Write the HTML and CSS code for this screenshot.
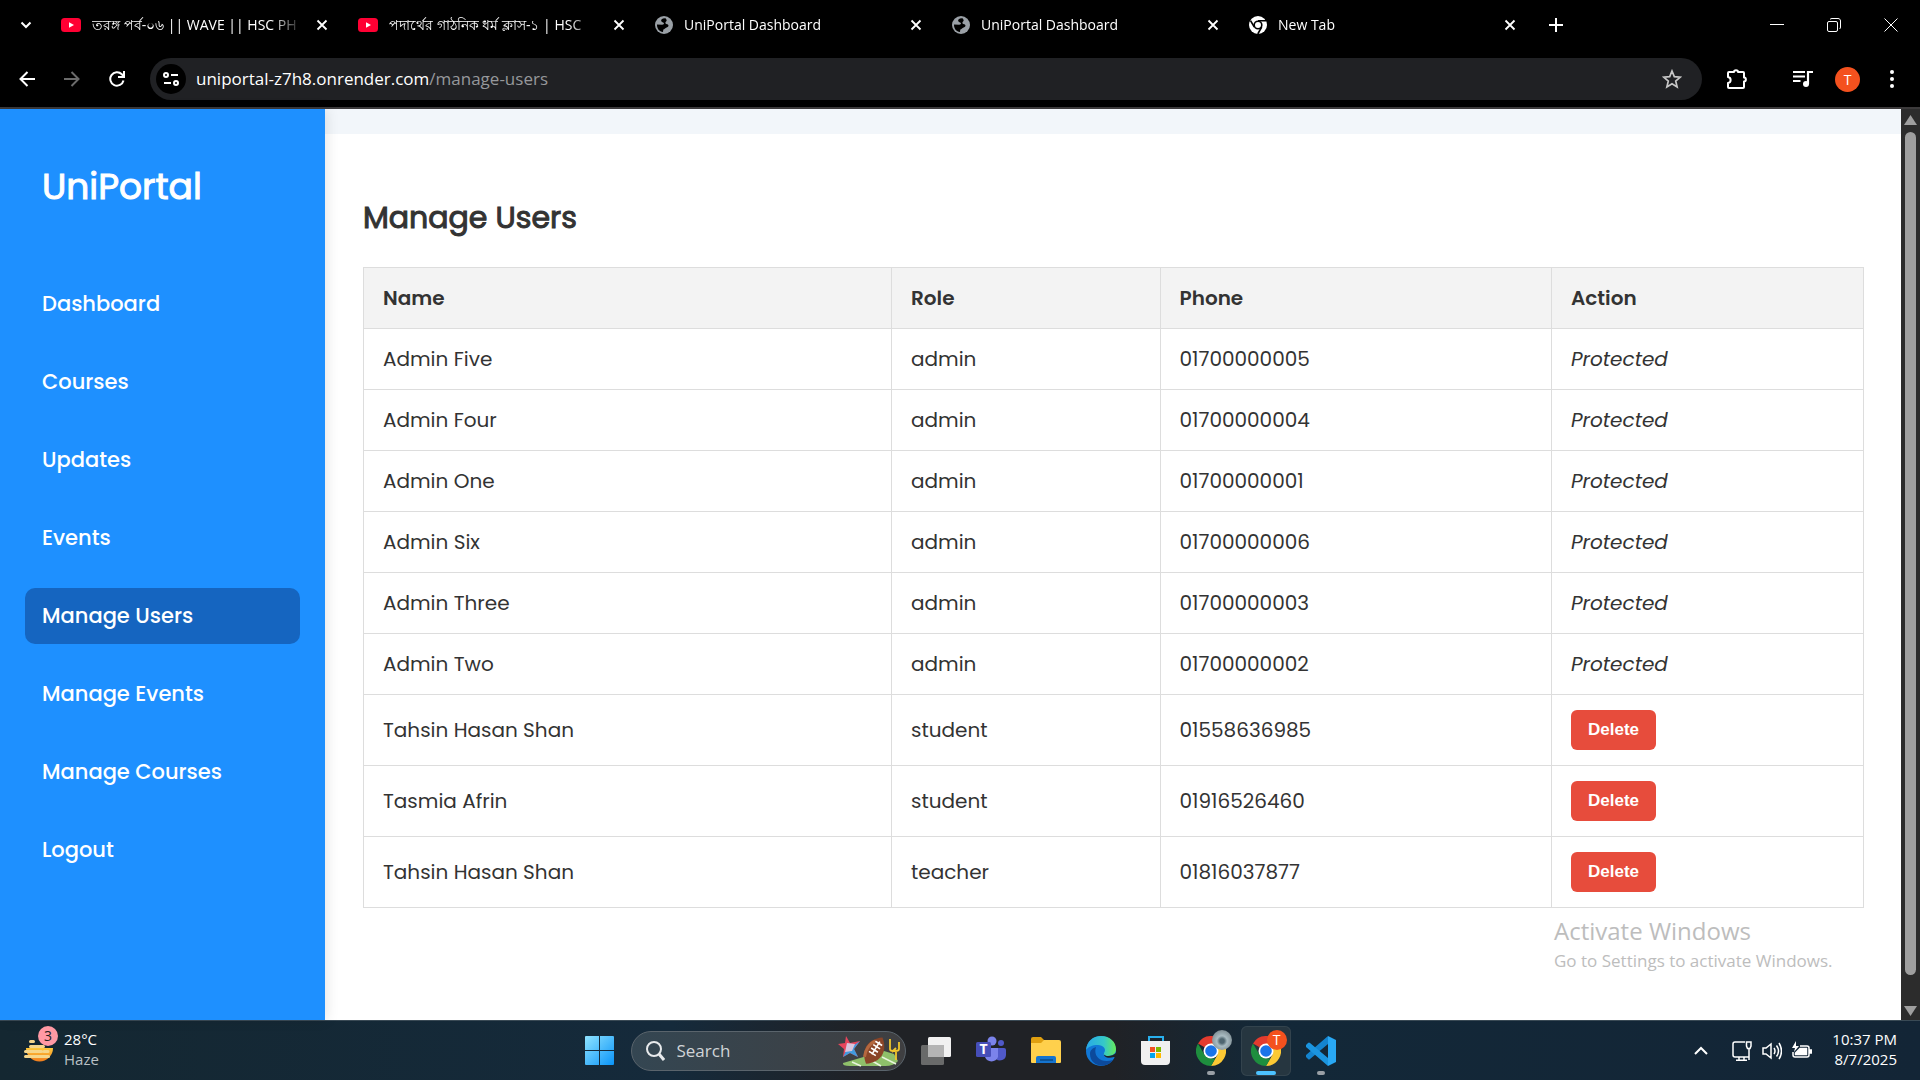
FILE: index.html
```html
<!DOCTYPE html>
<html lang="en">
<head>
<meta charset="utf-8">
<meta name="viewport" content="width=device-width, initial-scale=1">
<title>UniPortal Dashboard</title>
<link rel="stylesheet" href="styles.css">
</head>
<body>
<svg class="defs" aria-hidden="true">
  <symbol id="close" viewBox="0 0 12 12"><path d="M1.500 1.500 10.500 10.500M10.500 1.500 1.500 10.500" stroke="#fff" stroke-width="1.800" fill="none"/></symbol>
  <symbol id="youtube" viewBox="0 0 20 14"><rect width="20" height="14" rx="3.500" fill="#ff0033"/><path d="M8 4.200 13 7 8 9.800z" fill="#fff"/></symbol>
  <symbol id="globe" viewBox="0 0 18 18"><circle cx="9" cy="9" r="9" fill="#9aa0a6"/><path d="M10.500 2.200C7 2 5.800 3.600 6.200 5c.5 1.500 2 1 2.600 2 .6 1.200-.6 1.700-1.600 1.700L2 8.400c-.2 4 2.300 7.200 6 7.500l.3-2.300c1.200-.3 1.600-1.300 2.800-1.800 1.500-.6 2.800-1.300 2.300-2.600-.4-1-2-.9-2.800-1.700-.8-1 .4-1.700.9-2.500.5-.9-.2-1.700-1-2.800z" fill="#000"/></symbol>
  <symbol id="chrome" viewBox="0 0 30 30">
    <path d="M15 15 2 7.500A15 15 0 0 1 28 7.500z" fill="#e33b2e"/><path d="M15 7.500H28A15 15 0 0 1 15 30l6.500-11.200z" fill="#fcc934"/><path d="M2 7.500 8.500 18.800 15 22.500h4.300L15 30A15 15 0 0 1 2 7.500z" fill="#1e8e3e"/><circle cx="15" cy="15" r="7.500" fill="#fff"/><circle cx="15" cy="15" r="5.800" fill="#1a73e8"/>
  </symbol>
</svg>

<header class="browser">
  <div class="tabs">
    <button class="icon-button tab-search" aria-label="Search tabs"><svg width="12" height="8" viewBox="0 0 12 8"><path d="M1.500 1.500 6 6l4.500-4.500" fill="none" stroke="#fff" stroke-width="2"/></svg></button>
    <div class="tab"><svg class="favicon video"><use href="#youtube"/></svg><span class="tab-title">তরঙ্গ পর্ব-০৬ || WAVE || HSC PH</span><button class="icon-button" aria-label="Close tab"><svg width="12" height="12"><use href="#close"/></svg></button></div>
    <div class="tab"><svg class="favicon video"><use href="#youtube"/></svg><span class="tab-title">পদার্থের গাঠনিক ধর্ম ক্লাস-১ | HSC</span><button class="icon-button" aria-label="Close tab"><svg width="12" height="12"><use href="#close"/></svg></button></div>
    <div class="tab"><svg class="favicon"><use href="#globe"/></svg><span class="tab-title">UniPortal Dashboard</span><button class="icon-button" aria-label="Close tab"><svg width="12" height="12"><use href="#close"/></svg></button></div>
    <div class="tab"><svg class="favicon"><use href="#globe"/></svg><span class="tab-title">UniPortal Dashboard</span><button class="icon-button" aria-label="Close tab"><svg width="12" height="12"><use href="#close"/></svg></button></div>
    <div class="tab"><svg class="favicon" viewBox="0 0 18 18"><circle cx="9" cy="9" r="9" fill="#fff"/><circle cx="9" cy="9" r="3.800" fill="#fff" stroke="#000" stroke-width="1.600"/><path d="M9 4.800h8M5.300 11 1.500 4.600M12.700 11 8.800 18" stroke="#000" stroke-width="1.600"/></svg><span class="tab-title">New Tab</span><button class="icon-button" aria-label="Close tab"><svg width="12" height="12"><use href="#close"/></svg></button></div>
    <button class="icon-button new-tab" aria-label="New tab"><svg width="14" height="14" viewBox="0 0 14 14"><path d="M7 0v14M0 7h14" stroke="#fff" stroke-width="2"/></svg></button>
    <div class="window-controls">
      <button class="icon-button" aria-label="Minimize"><svg width="14" height="14"><path d="M0 6.500h14" stroke="#fff"/></svg></button>
      <button class="icon-button" aria-label="Restore"><svg width="14" height="14" fill="none" stroke="#fff"><rect x=".5" y="3.500" width="10" height="10" rx="1.500"/><path d="M3 1.500C3.500.8 4 .5 5 .5h6c1.500 0 2.500 1 2.500 2.500v6c0 1-.3 1.500-1 2"/></svg></button>
      <button class="icon-button" aria-label="Close window"><svg width="14" height="14"><path d="m.5.5 13 13m0-13-13 13" stroke="#fff"/></svg></button>
    </div>
  </div>
  <div class="toolbar">
    <div class="history">
      <button class="icon-button" aria-label="Back"><svg width="16" height="16" fill="none" stroke="#fff" stroke-width="2"><path d="M16 8H2M8.500 1 1.500 8l7 7"/></svg></button>
      <button class="icon-button" aria-label="Forward"><svg width="16" height="16" fill="none" stroke="#6b6b6b" stroke-width="2"><path d="M0 8h14M7.500 1l7 7-7 7"/></svg></button>
      <button class="icon-button" aria-label="Reload"><svg width="16" height="16" fill="none" stroke="#fff" stroke-width="2"><path d="M14.500 9.500A6.700 6.700 0 1 1 12.800 3.300L14.500 5M15 0v6H9"/></svg></button>
    </div>
    <div class="address">
      <button class="icon-button site-info" aria-label="View site information"><svg width="16" height="14" fill="none" stroke="#fff" stroke-width="2"><circle cx="3" cy="3" r="2"/><path d="M8 3h7M1 11h7"/><circle cx="13" cy="11" r="2"/></svg></button>
      <span class="url">uniportal-z7h8.onrender.com<span class="path">/manage-users</span></span>
      <button class="icon-button" aria-label="Bookmark this tab"><svg width="20" height="20" viewBox="0 0 20 20"><path d="m10 2 2.300 5.600 6 .5-4.600 3.900 1.400 5.900L10 14.700 4.900 17.900 6.300 12 1.700 8.100l6-.5z" fill="none" stroke="#c7c7c7" stroke-width="1.700"/></svg></button>
    </div>
    <div class="actions">
      <button class="icon-button" aria-label="Extensions"><svg width="22" height="22" viewBox="0 0 22 22"><path d="M3 4h5c0-2.500 4-2.500 4 0h5q1 0 1 1v4.500c2.500 0 2.500 4 0 4V19q0 1-1 1H3q-1 0-1-1v-4c3.500-.5 3.500-5.500 0-6V5q0-1 1-1z" fill="none" stroke="#fff" stroke-width="2" stroke-linejoin="round"/></svg></button>
      <button class="icon-button" aria-label="Media controls"><svg width="20" height="18" viewBox="0 0 20 18"><path d="M0 2h12M0 6.500h12M0 11h7.500" stroke="#fff" stroke-width="2"/><path d="M15 14V2h5" fill="none" stroke="#fff" stroke-width="2.200"/><circle cx="13" cy="14" r="3" fill="#fff"/></svg></button>
      <button class="avatar" aria-label="Profile">T</button>
      <button class="icon-button" aria-label="Menu"><svg width="4" height="20" fill="#fff"><circle cx="2" cy="3" r="2"/><circle cx="2" cy="10" r="2"/><circle cx="2" cy="17" r="2"/></svg></button>
    </div>
  </div>
</header>

<div class="viewport">
  <aside class="sidebar">
    <h2 class="brand">UniPortal</h2>
    <nav class="nav">
      <a href="#dashboard">Dashboard</a>
      <a href="#courses">Courses</a>
      <a href="#updates">Updates</a>
      <a href="#events">Events</a>
      <a href="#users" class="active" aria-current="page">Manage Users</a>
      <a href="#manage-events">Manage Events</a>
      <a href="#manage-courses">Manage Courses</a>
      <a href="#logout">Logout</a>
    </nav>
  </aside>
  <main class="content">
    <section class="panel">
      <h1 class="title">Manage Users</h1>
      <table class="users">
        <colgroup><col class="col-name"><col class="col-role"><col class="col-phone"><col class="col-action"></colgroup>
        <thead><tr><th>Name</th><th>Role</th><th>Phone</th><th>Action</th></tr></thead>
        <tbody>
          <tr><td>Admin Five</td><td>admin</td><td>01700000005</td><td><em>Protected</em></td></tr>
          <tr><td>Admin Four</td><td>admin</td><td>01700000004</td><td><em>Protected</em></td></tr>
          <tr><td>Admin One</td><td>admin</td><td>01700000001</td><td><em>Protected</em></td></tr>
          <tr><td>Admin Six</td><td>admin</td><td>01700000006</td><td><em>Protected</em></td></tr>
          <tr><td>Admin Three</td><td>admin</td><td>01700000003</td><td><em>Protected</em></td></tr>
          <tr><td>Admin Two</td><td>admin</td><td>01700000002</td><td><em>Protected</em></td></tr>
          <tr><td>Tahsin Hasan Shan</td><td>student</td><td>01558636985</td><td><button class="delete">Delete</button></td></tr>
          <tr><td>Tasmia Afrin</td><td>student</td><td>01916526460</td><td><button class="delete">Delete</button></td></tr>
          <tr><td>Tahsin Hasan Shan</td><td>teacher</td><td>01816037877</td><td><button class="delete">Delete</button></td></tr>
        </tbody>
      </table>
    </section>
  </main>
  <div class="scrollbar" aria-hidden="true">
    <svg width="13" height="10"><path d="M6.500 0 13 10H0z" fill="#9f9f9f"/></svg>
    <div class="thumb"></div>
    <svg width="13" height="10"><path d="M0 0h13L6.500 10z" fill="#9f9f9f"/></svg>
  </div>
  <div class="watermark"><p class="watermark-title">Activate Windows</p><p class="watermark-text">Go to Settings to activate Windows.</p></div>
</div>

<footer class="taskbar">
  <div class="weather">
    <div class="weather-icon">
      <svg width="30" height="30" viewBox="0 0 30 30"><defs><linearGradient id="sun" x2="0" y2="1"><stop stop-color="#ffc93c"/><stop offset="1" stop-color="#f07c1c"/></linearGradient></defs><path d="M2 15h27a13.500 13.500 0 0 1-27 0z" fill="url(#sun)"/><path d="M6.500 8.500h3M6.500 13.500h13M1.500 18.500h16M20 18.500h4M1.500 23.500h23" stroke="#f6d68a" stroke-width="3" stroke-linecap="round"/></svg>
      <span class="badge">3</span>
    </div>
    <div class="lines"><span>28°C</span><span class="dim">Haze</span></div>
  </div>
  <div class="apps">
    <button class="app" aria-label="Start"><svg width="30" height="30"><defs><linearGradient id="win" x2="1" y2="1"><stop stop-color="#8fe3ff"/><stop offset="1" stop-color="#0a94f8"/></linearGradient></defs><path d="M0 1q0-1 1-1h13v14H0zM15 0h13q1 0 1 1v13H15zM0 15h14v14H1q-1 0-1-1zM15 15h14v13q0 1-1 1H15z" fill="url(#win)"/></svg></button>
    <label class="search">
      <svg width="20" height="20" fill="none" stroke="#e8eaec" stroke-width="2"><circle cx="9" cy="8" r="7"/><path d="m14 13 5 6" stroke-width="3"/></svg>
      <input type="text" placeholder="Search" aria-label="Search">
      <svg width="62" height="32" viewBox="0 0 62 32">
        <path d="M5 28 46 16 56 19 60 26Q56 31 47 31H12q-8 0-7-3z" fill="#8fc06a"/><path d="m14 27 9 4M29 23l14 8M44 22l14 7" stroke="#e8f4dc" stroke-width="1.500"/>
        <path d="m8 1 4 7 10-2-6 8 4 8-8-4-7 4 1-8-6-5 7-1z" fill="#e6455c"/><path d="m22 6-6 8 4 8-8-4-7 4 3-6z" fill="#3f9be0"/><path d="m9 8 8 1-3 7-7 1z" fill="#d8c4dc"/>
        <g transform="rotate(32 36 16)"><path d="M36 0c12 9 12 22 0 31C24 22 24 9 36 0z" fill="#8a4528"/><path d="M32 7c-4 5-4 13-1 19" stroke="#b5683f" stroke-width="3" fill="none"/><path d="M36 5v15M32 7h8M32 11h8M32 15h8M32 19h8" stroke="#fff" stroke-width="1.600"/></g>
        <path d="M52 4v10q0 2 3 2h2q4 0 4-2V7M58 16v9M54 17l4-4" fill="none" stroke="#f0c62c" stroke-width="1.800"/>
      </svg>
    </label>
    <button class="app" aria-label="Task view"><svg width="30" height="30"><rect x="7" y="1" width="23" height="20" rx="1.500" fill="#f1f1f1"/><rect y="9" width="23" height="20" rx="1.500" fill="#777" fill-opacity=".85"/><path d="M7 9h16v12H7z" fill="#b4b4b4"/></svg></button>
    <button class="app" aria-label="Teams"><svg width="30" height="30"><circle cx="25" cy="7" r="3" fill="#5059c9"/><path d="M20 12h8q2 0 2 2v5a6 6 0 0 1-10 4z" fill="#5059c9"/><circle cx="16" cy="5" r="4.500" fill="#7b83eb"/><path d="M9 12h13v9a7 7 0 0 1-13 0z" fill="#7b83eb"/><rect y="6" width="15" height="15" rx="1.500" fill="#464eb8"/><text x="7.500" y="18" class="logo-letter">T</text></svg></button>
    <button class="app" aria-label="File Explorer"><svg width="30" height="30"><path d="M0 3q0-2 2-2h8l3 3v4H0z" fill="#e0a010"/><path d="M0 7h10l3-3h15q2 0 2 2v20q0 1-1 1H1q-1 0-1-1z" fill="#ffd04c"/><path d="M5 27v-5q0-2 2-2h16q2 0 2 2v5z" fill="#1574cf"/><path d="M9 24h13" stroke="#0b4a86" stroke-width="1.500"/></svg></button>
    <button class="app" aria-label="Edge"><svg width="30" height="30"><defs><linearGradient id="eg" x2="1"><stop stop-color="#28a8e8"/><stop offset=".6" stop-color="#35c8c8"/><stop offset="1" stop-color="#66eb5a"/></linearGradient></defs><circle cx="15" cy="15" r="15" fill="#1177d6"/><path d="M0 14C1 5 7 0 15 0c9 0 15 6 15 13 0 5-4 7-8 7s-5-2-4-3c3-4-1-8-6-8C6 9 2 11 0 14z" fill="url(#eg)"/><path d="M10 11c-3 9 4 17 17 13C20 34 4 30 4 18c0-4 3-6 6-7z" fill="#0c4a9c"/><path d="M18 17c-1 4 4 6 10 4l2 1v-5c-2 2-5 3-8 3s-5-2-4-3z" fill="#1f2226"/></svg></button>
    <button class="app" aria-label="Microsoft Store"><svg width="30" height="30"><path d="M8 6V1h14v5" fill="none" stroke="#28b0ee" stroke-width="2"/><path d="M0 5h29v20q0 4-4 4H4q-4 0-4-4z" fill="#f0f0f0"/><path d="M9 11h5v5H9z" fill="#f25022"/><path d="M15 11h5v5h-5z" fill="#7fba00"/><path d="M9 17h5v5H9z" fill="#00a4ef"/><path d="M15 17h5v5h-5z" fill="#ffb900"/></svg></button>
    <button class="app running" aria-label="Chrome, first profile"><svg width="30" height="30"><use href="#chrome"/></svg><span class="profile photo"></span></button>
    <button class="app running current" aria-label="Chrome, profile T"><svg width="30" height="30"><use href="#chrome"/></svg><span class="profile">T</span></button>
    <button class="app running" aria-label="Visual Studio Code"><svg width="30" height="30"><path d="m22 0 8 4v22l-8 4z" fill="#29a8f4"/><path d="M22 0v8L4 23q-1 1-2 0l-2-2q-1-1 0-2z" fill="#1484cf"/><path d="M22 30v-8L4 7Q3 6 2 7L0 9q-1 1 0 2z" fill="#1b95e0"/></svg></button>
  </div>
  <div class="tray">
    <button class="icon-button" aria-label="Show hidden icons"><svg width="14" height="9"><path d="m1 8 6-6 6 6" fill="none" stroke="#fff" stroke-width="2"/></svg></button>
    <div class="status">
      <svg width="20" height="20" fill="none" stroke="#fff" stroke-width="1.500"><path d="M13 1H3Q1 1 1 3v11q0 2 2 2h14M7 16v3M12 16v3M4 19.200h11M17 8v11"/><path d="M14.500 1h4.500v4l-1 2.500h-2.500l-1-2.500z"/></svg>
      <svg width="20" height="20" fill="none" stroke="#fff" stroke-width="1.500"><path d="M1 7h3l5-4v14l-5-4H1zM12 7q2 3 0 6M14.500 4.500q4 5.500 0 11M17 2q5 8 0 16"/></svg>
      <svg width="20" height="20" fill="none" stroke="#fff" stroke-width="1.500"><path d="M8 5h7q2 0 2 2v7q0 2-2 2H3q-2 0-2-2v-3M18 9v3h1.500V9z"/><path d="M8 7.500h6.500v6H3.500V12z" fill="#fff"/><path d="M4 0 0 7h3l-1 4 5-6H4z" fill="#fff" stroke="none"/></svg>
    </div>
    <div class="lines clock"><span>10:37 PM</span><span>8/7/2025</span></div>
  </div>
</footer>
</body>
</html>
```
FILE: styles.css
```css
* { box-sizing: border-box; }

body {
  margin: 0;
  min-height: 100vh;
  display: flex;
  flex-direction: column;
  background: #fff;
  color: #333;
  font-family: "Segoe UI", "Open Sans", "Noto Sans", sans-serif;
}

button { font: inherit; border: 0; cursor: pointer; }
svg { display: block; flex: none; }
.defs { position: absolute; width: 0; height: 0; }

.icon-button {
  padding: 0;
  min-width: 16px;
  display: flex;
  justify-content: center;
  align-items: center;
  background: none;
}

/* Browser frame */
.browser {
  background: #000;
  color: #fff;
  border-bottom: 2px solid #3c3a3b;
}
.tabs { display: flex; align-items: center; height: 50px; }
.tab-search { width: 52px; }
.tab {
  flex: 0 1 297px;
  min-width: 0;
  display: flex;
  align-items: center;
  gap: 11px;
  padding: 0 19px 0 9px;
}
.favicon { width: 18px; height: 18px; }
.video { width: 20px; height: 14px; }
.tab-title {
  flex: 1;
  min-width: 0;
  overflow: hidden;
  white-space: nowrap;
  font-size: 14px;
  line-height: 24px;
  -webkit-mask-image: linear-gradient(90deg, #000 85%, transparent);
  mask-image: linear-gradient(90deg, #000 85%, transparent);
}
.new-tab { width: 38px; }
.window-controls { margin-left: auto; display: flex; gap: 41px; padding-right: 21px; }

.toolbar { display: flex; align-items: center; padding: 8px 26px 7px 19px; }
.history { display: flex; gap: 29px; margin-right: 25px; }
.address {
  flex: 1;
  display: flex;
  align-items: center;
  height: 42px;
  padding: 0 20px 0 6px;
  border-radius: 21px;
  background: #202124;
}
.site-info { width: 30px; height: 30px; border-radius: 50%; background: #000; }
.url { flex: 1; margin-left: 10px; font-size: 17px; line-height: 24px; }
.path { color: #96989b; }
.actions { display: flex; align-items: center; margin-left: 24px; }
.actions > :nth-child(2) { margin-left: 45px; }
.avatar {
  width: 25px;
  height: 25px;
  margin: 0 30px 0 22px;
  padding: 0;
  border-radius: 50%;
  background: #f4511e;
  color: #fff;
  font-size: 14px;
}
.actions > :last-child { min-width: 4px; }

/* Page */
.viewport {
  flex: 1;
  display: flex;
  position: relative;
  font-family: Poppins, Inter, sans-serif;
}
.sidebar {
  position: relative;
  width: 325px;
  padding: 49px 25px;
  background: #1e90ff;
  color: #fff;
  box-shadow: 2px 0 12px rgba(0, 0, 0, 0.1);
}
.brand,
.title { font-weight: 400; -webkit-text-stroke: 1px currentColor; }
.brand { margin: 0 0 46px; padding-left: 17px; font-size: 36px; line-height: 57px; }
.nav { display: flex; flex-direction: column; gap: 22px; padding-top: 15px; }
.nav a {
  padding: 13px 17px;
  border-radius: 10px;
  color: #fff;
  font-size: 21px;
  line-height: 30px;
  font-weight: 500;
  text-decoration: none;
}
.nav .active { background: #1565c0; }

.content { flex: 1; min-width: 0; padding-top: 25px; background: #f2f6fa; }
.panel { height: 100%; padding: 60px 37px 40px 38px; background: #fff; }
.title { margin: 0 0 25px; font-size: 30px; line-height: 48px; }

.users { width: 100%; table-layout: fixed; border-collapse: collapse; font-size: 20px; line-height: 30px; }
.users th, .users td { padding: 15px 19px; border: 1px solid #ddd; text-align: left; vertical-align: middle; }
.users th { background: #f3f3f3; font-weight: 600; }
.col-name { width: 35.2%; }
.col-role { width: 17.9%; }
.col-phone { width: 26.1%; }
.col-action { width: 20.8%; }
.delete {
  display: block;
  padding: 8px 17px;
  border-radius: 6px;
  background: #e74c3c;
  color: #fff;
  font: bold 17px/24px "Liberation Sans", sans-serif;
}

.scrollbar {
  display: flex;
  flex-direction: column;
  align-items: center;
  gap: 7px;
  width: 19px;
  padding: 6px 0 4px;
  background: #2c2c2c;
}
.thumb { flex: 1; width: 11px; margin-bottom: 24px; border-radius: 6px; background: #9f9f9f; }

.watermark {
  position: absolute;
  right: 63px;
  bottom: 46px;
  width: 303px;
  color: #bdbdbd;
  font-family: "Segoe UI", "Open Sans", sans-serif;
  white-space: nowrap;
}
.watermark p { margin: 0; }
.watermark-title { font-size: 24px; line-height: 34px; }
.watermark-text { font-size: 17px; line-height: 26px; }

/* Taskbar */
.taskbar {
  display: grid;
  grid-template-columns: 1fr auto 1fr;
  align-items: center;
  height: 60px;
  border-top: 1px solid #3a4a55;
  background: linear-gradient(90deg, #142731 0%, #152a3b 35%, #202226 45%, #202226 58%, #132838 66%, #132536 100%);
  color: #fff;
}
.lines { display: flex; flex-direction: column; padding-bottom: 4px; font-size: 15px; line-height: 20px; }
.dim { color: #b9c0c5; }
.weather { display: flex; gap: 10px; padding-left: 24px; }
.weather-icon { position: relative; padding-top: 4px; width: 30px; }
.badge {
  position: absolute;
  left: 14px;
  top: -3px;
  width: 20px;
  height: 20px;
  border-radius: 50%;
  background: #ff99a4;
  color: #222;
  font-size: 14px;
  line-height: 20px;
  text-align: center;
}
.apps { display: flex; align-items: center; }
.app {
  position: relative;
  width: 50px;
  height: 50px;
  margin-right: 5px;
  padding: 0;
  display: flex;
  justify-content: center;
  align-items: center;
  border-radius: 6px;
  background: none;
}
.app:last-child { margin-right: 0; }
.search {
  display: flex;
  align-items: center;
  width: 275px;
  height: 40px;
  margin: 0 5px 0 1px;
  padding: 0 5px 0 13px;
  border: 1px solid #5a646c;
  border-radius: 20px;
  background: linear-gradient(90deg, #344652, #3f3f41);
}
.search input {
  flex: 1;
  min-width: 0;
  margin-left: 12px;
  padding: 0;
  border: 0;
  outline: 0;
  background: none;
  color: #fff;
  font: 17px/24px "Segoe UI", "Open Sans", sans-serif;
}
.search input::placeholder { color: #d0d4d7; }
.logo-letter { fill: #fff; font: bold 14px "Open Sans", sans-serif; text-anchor: middle; }
.current { background: #263640; box-shadow: inset 0 0 0 1px #33434d; }
.running::after {
  content: "";
  position: absolute;
  left: 21px;
  bottom: 1px;
  width: 8px;
  height: 4px;
  border-radius: 2px;
  background: #9aa0a6;
}
.current::after { left: 15px; width: 20px; background: #4cc2ff; }
.profile {
  position: absolute;
  right: 4px;
  top: 4px;
  width: 20px;
  height: 20px;
  border-radius: 50%;
  background: #f4511e;
  color: #fff;
  font-size: 14px;
  line-height: 20px;
}
.photo { background: radial-gradient(circle at 50% 55%, #4f6670 15%, #a9bcc2 35%, #7e8d93 75%); }
.tray { display: flex; justify-content: flex-end; align-items: center; padding-right: 23px; }
.status { display: flex; gap: 10px; margin: 0 20px 0 23px; }
.clock { text-align: right; }
```
